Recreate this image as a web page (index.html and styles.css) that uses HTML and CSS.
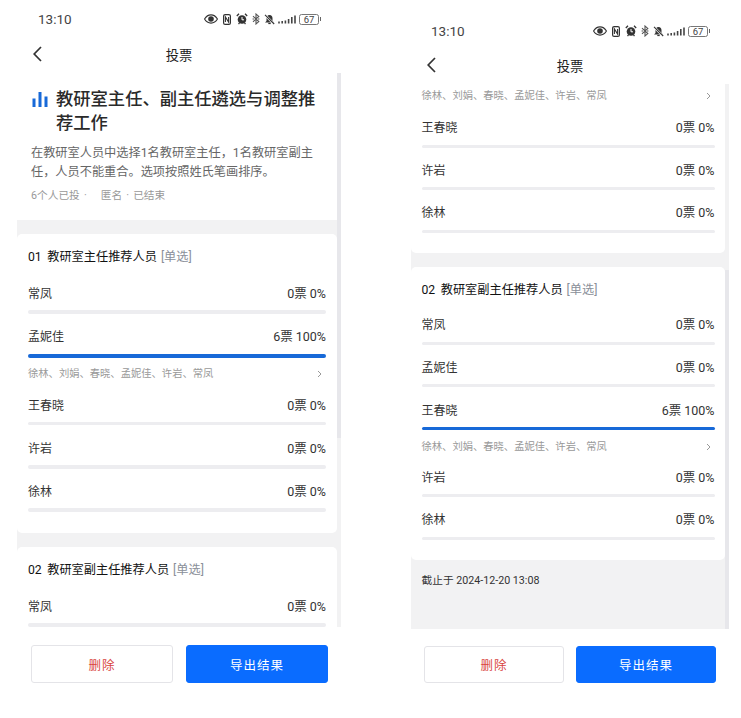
FILE: index.html
```html
<!DOCTYPE html>
<html lang="zh-CN">
<head>
<meta charset="utf-8">
<title>投票</title>
<link rel="stylesheet" href="styles.css">
</head>
<body>
<svg class="defs" width="0" height="0" aria-hidden="true">
  <symbol id="i-eye" viewBox="0 0 15 10"><path d="M.6 5C2.4 2 4.7.6 7.5.6S12.6 2 14.4 5c-1.8 3-4.100 4.400-6.900 4.400S2.400 8 .6 5Z" fill="none" stroke="#333" stroke-width="1.200"/><circle cx="7.500" cy="5" r="3" fill="#333"/></symbol>
  <symbol id="i-nfc" viewBox="0 0 8 11"><rect x=".6" y=".6" width="6.800" height="9.800" rx="1.500" fill="none" stroke="#333" stroke-width="1.200"/><path d="M2.400 8V3l3.200 5V3" fill="none" stroke="#333" stroke-width="1.100"/></symbol>
  <symbol id="i-alarm" viewBox="0 0 12 12"><circle cx="6" cy="6.500" r="4.300" fill="#333"/><path d="M.8 3 3 .8M11.200 3 9 .8M2.500 11 3.500 10M9.500 11l-1-1" stroke="#333" stroke-width="1.300"/><path d="M6 4v2.800h2" fill="none" stroke="#fff" stroke-width="1"/></symbol>
  <symbol id="i-bt" viewBox="0 0 8 12"><path d="M1 3.200 6.800 8.600 4 11V1l2.800 2.400L1 8.800" fill="none" stroke="#555" stroke-width="1.100"/><circle cx="1.200" cy="6" r=".7" fill="#555"/><circle cx="6.800" cy="6" r=".7" fill="#555"/></symbol>
  <symbol id="i-bell" viewBox="0 0 11 11"><path d="M5.500 1C3.500 1 2.500 2.500 2.500 4.500V7L1 8.500h9L8.500 7V4.500C8.500 2.500 7.500 1 5.500 1Z" fill="#333"/><path d="M4.300 9.500h2.400" stroke="#333" stroke-width="1.200"/><path d="M1 1l9 9" stroke="#fff" stroke-width="2.400"/><path d="M1 .8l9.200 9.200" stroke="#333" stroke-width="1.100"/></symbol>
  <symbol id="i-signal" viewBox="0 0 18 9"><path d="M1 6.500v2M4.200 6v2.500M7.400 5.500v3M10.600 4v4.500M13.800 2v6.500M17 .5v8" stroke="#444" stroke-width="1.600"/></symbol>
  <symbol id="i-more" viewBox="0 0 5 8"><path d="M1 1l3 3-3 3" fill="none" stroke="#999" stroke-width="1"/></symbol>
  <symbol id="i-back" viewBox="0 0 9 16"><path d="M8 1 1.200 8 8 15" fill="none" stroke="#333" stroke-width="1.700"/></symbol>
</svg>

<main class="screens">
  <section class="phone phone-left">
    <div class="status">
      <span class="time">13:10</span>
      <div class="status-icons">
        <svg class="ic-eye"><use href="#i-eye"/></svg>
        <svg class="ic-nfc"><use href="#i-nfc"/></svg>
        <svg class="ic-alarm"><use href="#i-alarm"/></svg>
        <svg class="ic-bt"><use href="#i-bt"/></svg>
        <svg class="ic-bell"><use href="#i-bell"/></svg>
        <svg class="ic-signal"><use href="#i-signal"/></svg>
        <span class="battery">67</span>
      </div>
    </div>
    <header class="nav">
      <svg class="ic-back"><use href="#i-back"/></svg>
      <h1 class="nav-title">投票</h1>
    </header>
    <div class="viewport">
      <div class="content">
        <div class="intro">
          <div class="intro-head">
            <svg class="ic-chart" viewBox="0 0 15 15"><path d="M0 6.500h3V15H0zM6 0h3v15H6zM12 4.500h3V15h-3z" fill="#1769d8"/></svg>
            <h2 class="intro-title">教研室主任、副主任遴选与调整推荐工作</h2>
          </div>
          <p class="intro-desc">在教研室人员中选择1名教研室主任，1名教研室副主任，人员不能重合。选项按照姓氏笔画排序。</p>
          <p class="intro-meta"><span>6个人已投 ·</span><span>匿名 · 已结束</span></p>
        </div>
        <div class="card">
          <h3 class="group-title"><b>01</b>教研室主任推荐人员<i>[单选]</i></h3>
          <div class="row"><div class="line"><span>常凤</span><span class="count">0票 0%</span></div><div class="bar"></div></div>
          <div class="row row-won"><div class="line"><span>孟妮佳</span><span class="count">6票 100%</span></div><div class="bar bar-full"></div>
            <div class="voters"><span>徐林、刘娟、春晓、孟妮佳、许岩、常凤</span><svg class="ic-more"><use href="#i-more"/></svg></div></div>
          <div class="row"><div class="line"><span>王春晓</span><span class="count">0票 0%</span></div><div class="bar"></div></div>
          <div class="row"><div class="line"><span>许岩</span><span class="count">0票 0%</span></div><div class="bar"></div></div>
          <div class="row"><div class="line"><span>徐林</span><span class="count">0票 0%</span></div><div class="bar"></div></div>
        </div>
        <div class="card">
          <h3 class="group-title"><b>02</b>教研室副主任推荐人员<i>[单选]</i></h3>
          <div class="row"><div class="line"><span>常凤</span><span class="count">0票 0%</span></div><div class="bar"></div></div>
        </div>
      </div>
      <div class="track"><div class="thumb"></div></div>
    </div>
    <footer class="actions">
      <button class="btn btn-ghost" type="button">删除</button>
      <button class="btn btn-primary" type="button">导出结果</button>
    </footer>
  </section>

  <section class="phone phone-right">
    <div class="status">
      <span class="time">13:10</span>
      <div class="status-icons">
        <svg class="ic-eye"><use href="#i-eye"/></svg>
        <svg class="ic-nfc"><use href="#i-nfc"/></svg>
        <svg class="ic-alarm"><use href="#i-alarm"/></svg>
        <svg class="ic-bt"><use href="#i-bt"/></svg>
        <svg class="ic-bell"><use href="#i-bell"/></svg>
        <svg class="ic-signal"><use href="#i-signal"/></svg>
        <span class="battery">67</span>
      </div>
    </div>
    <header class="nav">
      <svg class="ic-back"><use href="#i-back"/></svg>
      <h1 class="nav-title">投票</h1>
    </header>
    <div class="viewport">
      <div class="content">
        <div class="card card-cut">
          <div class="voters"><span>徐林、刘娟、春晓、孟妮佳、许岩、常凤</span><svg class="ic-more"><use href="#i-more"/></svg></div>
          <div class="row"><div class="line"><span>王春晓</span><span class="count">0票 0%</span></div><div class="bar"></div></div>
          <div class="row"><div class="line"><span>许岩</span><span class="count">0票 0%</span></div><div class="bar"></div></div>
          <div class="row"><div class="line"><span>徐林</span><span class="count">0票 0%</span></div><div class="bar"></div></div>
        </div>
        <div class="card">
          <h3 class="group-title"><b>02</b>教研室副主任推荐人员<i>[单选]</i></h3>
          <div class="row"><div class="line"><span>常凤</span><span class="count">0票 0%</span></div><div class="bar"></div></div>
          <div class="row"><div class="line"><span>孟妮佳</span><span class="count">0票 0%</span></div><div class="bar"></div></div>
          <div class="row row-won"><div class="line"><span>王春晓</span><span class="count">6票 100%</span></div><div class="bar bar-full"></div>
            <div class="voters"><span>徐林、刘娟、春晓、孟妮佳、许岩、常凤</span><svg class="ic-more"><use href="#i-more"/></svg></div></div>
          <div class="row"><div class="line"><span>许岩</span><span class="count">0票 0%</span></div><div class="bar"></div></div>
          <div class="row"><div class="line"><span>徐林</span><span class="count">0票 0%</span></div><div class="bar"></div></div>
        </div>
        <p class="deadline">截止于 2024-12-20 13:08</p>
      </div>
      <div class="track"><div class="thumb"></div></div>
    </div>
    <footer class="actions">
      <button class="btn btn-ghost" type="button">删除</button>
      <button class="btn btn-primary" type="button">导出结果</button>
    </footer>
  </section>
</main>
</body>
</html>
```

FILE: styles.css
```css
* { box-sizing: border-box; }
html, body { margin: 0; padding: 0; background: #fff; }
body {
  width: 741px;
  height: 718px;
  overflow: hidden;
  font-family: Roboto, "Noto Sans CJK SC", sans-serif;
  color: #333;
}
.defs { display: block; height: 0; }
.screens { display: flex; }
.phone { display: flex; flex-direction: column; }
.phone-left { width: 370px; padding: 10px 29px 0 17px; }
.phone-right { width: 371px; padding: 22px 12px 0 41px; }

/* Status bar */
.status { display: flex; align-items: center; justify-content: space-between; height: 18px; }
.time { font-size: 13.500px; color: #444; }
.phone-left .status { padding: 0 22px 0 21px; }
.phone-right .status { padding: 0 21px 0 20px; }
.status-icons { display: flex; align-items: center; }
.status-icons svg { display: block; flex: none; }
.ic-eye { width: 14px; height: 10px; margin-right: 5px; }
.ic-nfc { width: 8px; height: 11px; margin-right: 5px; }
.ic-alarm { width: 12px; height: 12px; margin-right: 4px; }
.ic-bt { width: 8px; height: 12px; margin-right: 4px; }
.ic-bell { width: 11px; height: 11px; margin-right: 3px; }
.ic-signal { width: 18px; height: 9px; margin-right: 3px; }
.battery {
  position: relative;
  display: block;
  width: 20px;
  height: 11px;
  border: 1px solid #777;
  border-radius: 2.500px;
  font-size: 9.500px;
  line-height: 9px;
  text-align: center;
  color: #444;
}
.battery::after {
  content: "";
  position: absolute;
  right: -3px;
  top: 2.500px;
  width: 1.500px;
  height: 4px;
  background: #666;
}

/* Nav */
.nav { position: relative; display: flex; align-items: center; justify-content: center; }
.phone-left .nav { height: 45px; padding: 8px 0 0; }
.phone-right .nav { height: 44px; padding: 6px 0 0; }
.nav-title { margin: 0; font-size: 13.300px; font-weight: 400; color: #222; }
.ic-back { position: absolute; width: 9px; height: 16px; }
.phone-left .ic-back { left: 16px; top: 18px; }
.phone-right .ic-back { left: 16px; top: 17px; }

/* Scroll viewport */
.viewport { display: flex; overflow: hidden; background: #f2f2f3; }
.phone-left .viewport { height: 554px; }
.phone-right .viewport { height: 545px; }
.content { flex: 1; min-width: 0; }
.track { flex: none; width: 4px; background: #f2f2f3; }
.thumb { width: 100%; background: #e7e7eb; }
.phone-left .thumb { height: 365px; }
.phone-right .thumb { height: 359px; margin-top: 186px; }

/* Intro */
.intro { background: #fff; padding: 14px 20px 16px 14px; margin-bottom: 14px; }
.intro-head { display: flex; }
.ic-chart { flex: none; width: 16px; height: 15px; margin: 5px 8px 0 1px; }
.intro-title { margin: 0; font-size: 17.300px; line-height: 24px; font-weight: 500; color: #2a2a2a; }
.intro-desc { margin: 8.500px 0 0; font-size: 12.200px; line-height: 19px; color: #666; }
.intro-meta { display: flex; gap: 14px; margin: 6.500px 0 0; font-size: 10.700px; line-height: 16px; word-spacing: 1.500px; color: #999; }

/* Cards */
.card { background: #fff; border-radius: 5px; margin-bottom: 14px; }
.phone-left .card { padding: 14px 11px 6.750px; }
.phone-right .card { padding: 13.500px 10.500px 6px; }
.phone-right .card-cut { padding: 3px 10.500px 6.600px; border-radius: 0 0 5px 5px; }
.group-title { display: flex; margin: 0 0 18.750px; font-size: 12.200px; line-height: 18px; font-weight: 400; color: #111; }
.phone-right .group-title { margin-bottom: 17.500px; }
.group-title b { font-weight: 400; margin-right: 5.500px; }
.group-title i { font-style: normal; color: #8a8f99; margin-left: 4px; }

.line { display: flex; justify-content: space-between; font-size: 12px; line-height: 18px; color: #333; }
.count { font-size: 12.500px; }
.row { padding-bottom: 14.500px; }
.phone-right .row { padding-bottom: 14.100px; }
.bar { height: 3.500px; margin-top: 7.250px; border-radius: 2px; background: #ededf0; }
.phone-right .bar { margin-top: 7.500px; height: 3px; }
.bar-full { background: #1769d8; }
.phone-left .bar-full { margin-top: 8px; }
.voters {
  display: flex;
  align-items: center;
  justify-content: space-between;
  padding-right: 4px;
  font-size: 10.300px;
  line-height: 18px;
  color: #999;
}
.row-won { padding-bottom: 13.500px; }
.phone-right .row-won { padding-bottom: 13px; }
.row-won .voters { margin-top: 7.500px; }
.card-cut .voters { margin-bottom: 14px; }
.ic-more { flex: none; width: 5px; height: 8px; }

.deadline { margin: -14px 0 0; padding: 12.500px 10.500px; font-size: 10.700px; line-height: 18px; color: #333; }

/* Footer actions */
.actions { display: flex; }
.phone-left .actions { padding: 18px 0 0 14px; gap: 13px; }
.phone-right .actions { padding: 17px 0 0 13px; gap: 12px; }
.btn {
  height: 38px;
  border-radius: 3px;
  font-family: inherit;
  font-size: 12.500px;
  letter-spacing: 1px;
  padding: 0;
}
.phone-left .btn { width: 142px; }
.phone-right .btn { width: 140px; height: 37px; }
.btn-ghost { background: #fff; border: 1px solid #e4e4e8; color: #d9453d; }
.btn-primary { background: #0a6cff; border: 1px solid #0a6cff; color: #fff; }
```
